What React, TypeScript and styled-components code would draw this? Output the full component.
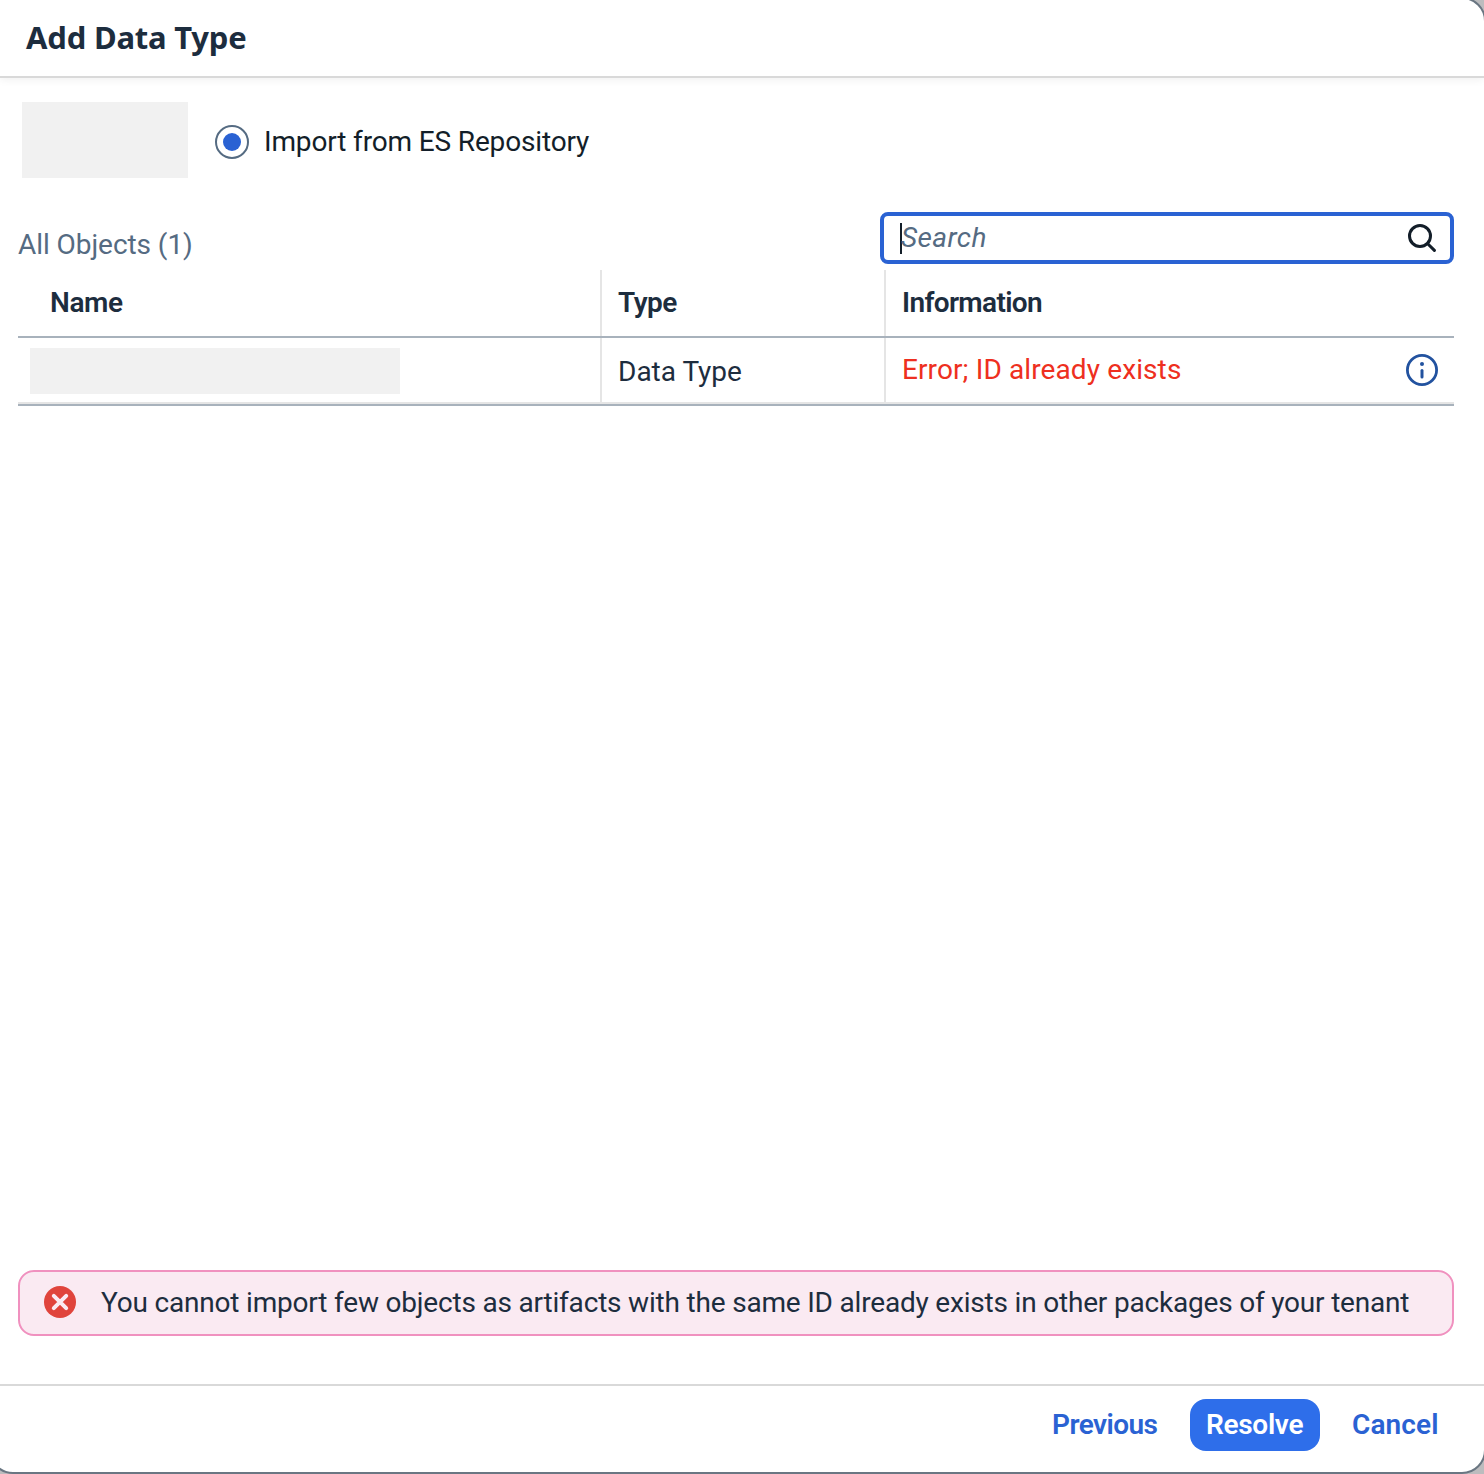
import React from "react";
import styled, { createGlobalStyle, css } from "styled-components";

const GlobalStyle = createGlobalStyle`
  * {
    box-sizing: border-box;
  }
  body {
    margin: 0;
    background: #bcbcbe;
    font-family: Roboto, "Liberation Sans", sans-serif;
    font-size: 28px;
    line-height: 33px;
    color: #1d2d3e;
  }
`;

const Viewport = styled.div`
  height: 1474px;
  overflow: hidden;
`;

const Dialog = styled.section`
  display: flex;
  flex-direction: column;
  height: 1477px;
  margin: -3px -2px 0 -11px;
  padding: 1px 0 0 9px;
  border: 2px solid #6a7682;
  border-radius: 10px 24px 24px 24px;
  background: #fff;
  overflow: hidden;
`;

const Header = styled.header`
  flex: none;
  display: flex;
  align-items: center;
  height: 78px;
  padding: 0 0 2px 26px;
  border-bottom: 2px solid #d9d9d9;
  box-shadow: 0 2px 8px rgba(0, 0, 0, 0.06);
`;

const Title = styled.h1`
  margin: 0;
  font-family: "Noto Sans", Roboto, sans-serif;
  font-size: 31px;
  line-height: 42px;
  font-weight: 700;
  letter-spacing: -0.2px;
`;

const Body = styled.main`
  flex: 1;
  display: flex;
  flex-direction: column;
  width: 1484px;
  padding: 24px 30px 48px 18px;
`;

const Redacted = styled.div<{ $width: number; $height: number }>`
  flex: none;
  width: ${(p) => p.$width}px;
  height: ${(p) => p.$height}px;
  background: #f1f1f1;
`;

const SourceOptions = styled.div`
  display: flex;
  gap: 27px;
  padding-left: 4px;
`;

const RadioOption = styled.label`
  display: flex;
  align-items: center;
  gap: 15px;
  padding-top: 3px;
  color: #131e29;
  letter-spacing: -0.15px;
`;

const RadioRing = styled.span`
  display: grid;
  place-items: center;
  width: 34px;
  height: 34px;
  margin-top: 1px;
  border: 2px solid #556b82;
  border-radius: 50%;

  &::after {
    content: "";
    width: 18px;
    height: 18px;
    border-radius: 50%;
    background: #2a62d3;
  }
`;

const Toolbar = styled.div`
  display: flex;
  justify-content: space-between;
  height: 52px;
  margin: 34px 0 6px;
`;

const ObjectCount = styled.span`
  padding-top: 16px;
  color: #556b82;
  letter-spacing: -0.06px;
`;

const SearchField = styled.div`
  display: flex;
  justify-content: space-between;
  width: 574px;
  padding: 5px 14px 0 16px;
  border: 4px solid #2a62d3;
  border-radius: 8px;
  background: #fff;

  svg {
    margin-top: 3px;
  }
`;

const Placeholder = styled.span`
  display: flex;
  color: #556b82;
  font-style: italic;
  letter-spacing: 0.4px;
`;

const Caret = styled.i`
  width: 2px;
  height: 31px;
  margin: 2px -1px 0 0;
  background: #131e29;
`;

const Table = styled.div`
  display: flex;
  flex-direction: column;
  border-bottom: 2px solid #a8b2bc;
`;

const Row = styled.div<{ $head?: boolean }>`
  display: grid;
  grid-template-columns: 582px 284px 1fr;
  height: ${(p) => (p.$head ? 68 : 66)}px;
  border-bottom: 2px solid ${(p) => (p.$head ? "#a8b2bc" : "#e5e5e5")};

  > * + * {
    border-left: 2px solid #e5e5e5;
  }
`;

const HeadCell = styled.div<{ $first?: boolean; $tracking: number }>`
  padding: 16px 16px 0 ${(p) => (p.$first ? 32 : 16)}px;
  font-weight: 600;
  letter-spacing: ${(p) => p.$tracking}px;
`;

const NameCell = styled.div`
  padding: 10px 12px;
`;

const TypeCell = styled.div`
  padding: 17px 16px 0;
`;

const InfoCell = styled.div`
  display: flex;
  justify-content: space-between;
  padding: 15px 16px 0 16px;
  color: #ee2f20;
  letter-spacing: 0.11px;

  svg {
    margin-top: 1px;
  }
`;

const MessageStrip = styled.div`
  display: flex;
  align-items: center;
  gap: 25px;
  height: 66px;
  margin-top: auto;
  padding: 0 0 2px 24px;
  border: 2px solid #f091bf;
  border-radius: 16px;
  background: #faeaf2;
  white-space: nowrap;
  letter-spacing: -0.192px;

  svg {
    flex: none;
  }
`;

const Footer = styled.footer`
  flex: none;
  display: flex;
  gap: 16px;
  justify-content: flex-end;
  width: 1484px;
  height: 88px;
  padding: 13px 30px 0 0;
  border-top: 2px solid #d9d9d9;
`;

const Button = styled.button<{ $width: number; $tracking: number; $primary?: boolean }>`
  width: ${(p) => p.$width}px;
  height: 52px;
  padding: 0 0 2px 16px;
  border: 0;
  border-radius: 16px;
  background: transparent;
  color: #2a62d3;
  font: 600 28px/33px Roboto, "Liberation Sans", sans-serif;
  letter-spacing: ${(p) => p.$tracking}px;
  text-align: left;
  ${(p) =>
    p.$primary &&
    css`
      background: #2e6eea;
      color: #fff;
    `}
`;

const SearchIcon = () => (
  <svg width="28" height="28" viewBox="0 0 28 28" fill="none" stroke="#131e29" strokeWidth="3" strokeLinecap="round">
    <circle cx="12" cy="12" r="10.5" />
    <path d="M19.7 19.7 26.4 26.4" />
  </svg>
);

const InfoIcon = () => (
  <svg width="32" height="32" viewBox="0 0 32 32" fill="none">
    <circle cx="16" cy="16" r="14.6" stroke="#22529f" strokeWidth="2.8" />
    <circle cx="16" cy="10" r="2" fill="#22529f" />
    <path d="M16 16.5v6.6" stroke="#22529f" strokeWidth="3" strokeLinecap="round" />
  </svg>
);

const ErrorIcon = () => (
  <svg width="32" height="32" viewBox="0 0 32 32" fill="none">
    <circle cx="16" cy="16" r="16" fill="#e0443c" />
    <path d="m9.8 9.8 12.4 12.4M22.2 9.8 9.8 22.2" stroke="#faeaf2" strokeWidth="4" strokeLinecap="round" />
  </svg>
);

export default function App() {
  return (
    <Viewport>
      <GlobalStyle />
      <Dialog>
        <Header>
          <Title>Add Data Type</Title>
        </Header>
        <Body>
          <SourceOptions>
            <Redacted $width={166} $height={76} />
            <RadioOption>
              <RadioRing />
              Import from ES Repository
            </RadioOption>
          </SourceOptions>
          <Toolbar>
            <ObjectCount>All Objects (1)</ObjectCount>
            <SearchField>
              <Placeholder>
                <Caret />
                Search
              </Placeholder>
              <SearchIcon />
            </SearchField>
          </Toolbar>
          <Table>
            <Row $head>
              <HeadCell $first $tracking={-0.4}>Name</HeadCell>
              <HeadCell $tracking={-0.5}>Type</HeadCell>
              <HeadCell $tracking={-0.64}>Information</HeadCell>
            </Row>
            <Row>
              <NameCell>
                <Redacted $width={370} $height={46} />
              </NameCell>
              <TypeCell>Data Type</TypeCell>
              <InfoCell>
                Error; ID already exists
                <InfoIcon />
              </InfoCell>
            </Row>
          </Table>
          <MessageStrip>
            <ErrorIcon />
            You cannot import few objects as artifacts with the same ID already exists in other packages of your tenant
          </MessageStrip>
        </Body>
        <Footer>
          <Button $width={138} $tracking={-0.55}>Previous</Button>
          <Button $primary $width={130} $tracking={-0.3}>Resolve</Button>
          <Button $width={118} $tracking={0.1}>Cancel</Button>
        </Footer>
      </Dialog>
    </Viewport>
  );
}
